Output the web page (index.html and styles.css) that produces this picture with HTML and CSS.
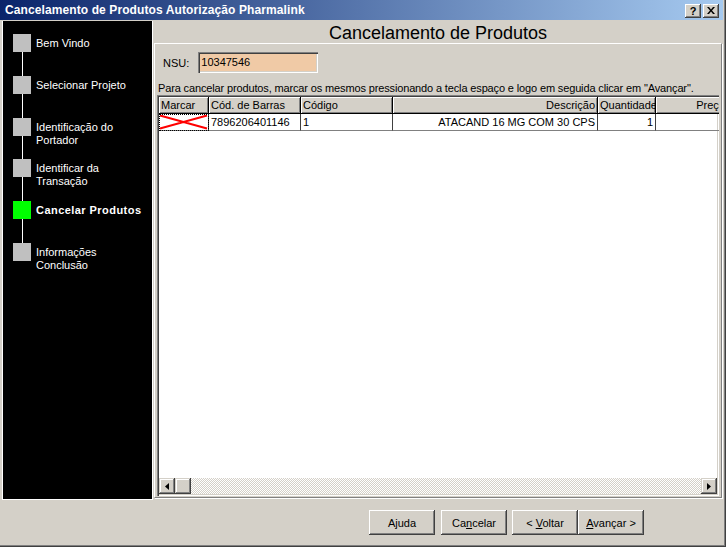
FILE: index.html
```html
<!DOCTYPE html>
<html lang="pt-BR">
<head>
    <meta charset="UTF-8">
    <title>Cancelamento de Produtos Autorização Pharmalink</title>
    <link rel="stylesheet" href="styles.css">
</head>
<body>
    <div class="window">
        <div class="titlebar">
            <span class="title">Cancelamento de Produtos Autorização Pharmalink</span>
            <div class="caption-buttons">
                <span class="cap-btn">?</span>
                <span class="cap-btn">
                    <svg width="8" height="7" viewBox="0 0 8 7"><path d="M0 0h2l2 2.5L6 0h2L5 3.5 8 7H6L4 4.5 2 7H0l3-3.5z" fill="#000"/></svg>
                </span>
            </div>
        </div>

        <div class="main">
            <!-- passos do assistente -->
            <ul class="steps">
                <li class="step">
                    <div class="marker"><span class="box"></span><span class="connector"></span></div>
                    <span class="label">Bem Vindo</span>
                </li>
                <li class="step">
                    <div class="marker"><span class="box"></span><span class="connector"></span></div>
                    <span class="label">Selecionar Projeto</span>
                </li>
                <li class="step">
                    <div class="marker"><span class="box"></span><span class="connector"></span></div>
                    <span class="label">Identificação do<br>Portador</span>
                </li>
                <li class="step">
                    <div class="marker"><span class="box"></span><span class="connector"></span></div>
                    <span class="label">Identificar da<br>Transação</span>
                </li>
                <li class="step current">
                    <div class="marker"><span class="box"></span><span class="connector"></span></div>
                    <span class="label">Cancelar Produtos</span>
                </li>
                <li class="step">
                    <div class="marker"><span class="box"></span></div>
                    <span class="label">Informações<br>Conclusão</span>
                </li>
            </ul>

            <div class="content">
                <h1 class="heading">Cancelamento de Produtos</h1>

                <div class="panel">
                    <div class="nsu">
                        <span class="nsu-label">NSU:</span>
                        <div class="input">10347546</div>
                    </div>

                    <p class="hint">Para cancelar produtos, marcar os mesmos pressionando a tecla espaço e logo em seguida clicar em "Avançar".</p>

                    <div class="grid">
                        <div class="grid-head">
                            <span class="cell">Marcar</span>
                            <span class="cell">Cód. de Barras</span>
                            <span class="cell">Código</span>
                            <span class="cell right">Descrição</span>
                            <span class="cell">Quantidade</span>
                            <span class="cell right">Preço</span>
                        </div>
                        <div class="grid-row">
                            <span class="cell mark">
                                <svg width="100%" height="100%" viewBox="0 0 50 16" preserveAspectRatio="none">
                                    <path d="M1 1.5L49 14.5M1 14.5L49 1.5" stroke="#ff0000" stroke-width="2"/>
                                </svg>
                            </span>
                            <span class="cell">7896206401146</span>
                            <span class="cell">1</span>
                            <span class="cell right">ATACAND 16 MG COM 30 CPS</span>
                            <span class="cell right">1</span>
                            <span class="cell right"></span>
                        </div>
                        <div class="grid-fill"></div>
                        <div class="hscroll">
                            <span class="sb-btn">
                                <svg width="4" height="7" viewBox="0 0 4 7"><path d="M4 0v7L0 3.5z" fill="#000"/></svg>
                            </span>
                            <span class="sb-btn"></span>
                            <span class="sb-track"></span>
                            <span class="sb-btn">
                                <svg width="4" height="7" viewBox="0 0 4 7"><path d="M0 0v7l4-3.5z" fill="#000"/></svg>
                            </span>
                        </div>
                    </div>
                </div>
            </div>
        </div>

        <div class="footer">
            <button class="btn">A<u>j</u>uda</button>
            <button class="btn">Ca<u>n</u>celar</button>
            <button class="btn">&lt; <u>V</u>oltar</button>
            <button class="btn"><u>A</u>vançar &gt;</button>
        </div>
    </div>
</body>
</html>
```

FILE: styles.css
```css
* {
    margin: 0;
    padding: 0;
    box-sizing: border-box;
}

body {
    width: 726px;
    height: 547px;
    overflow: hidden;
    font-family: "Liberation Sans", Arial, sans-serif;
    font-size: 11px;
    color: #000;
}

.window {
    width: 726px;
    height: 547px;
    background-color: #d4d0c8;
    display: flex;
    flex-direction: column;
    padding: 0 3px 2px 0;
    box-shadow: inset -1px -1px #404040, inset -2px -2px #808080;
}

/* barra de titulo */
.titlebar {
    height: 20px;
    flex: none;
    margin-bottom: 1px;
    display: flex;
    align-items: center;
    justify-content: space-between;
    padding: 0 4px 0 5px;
    background: linear-gradient(to right, #0a246a, #a6caf0);
    color: white;
    font-weight: bold;
    font-size: 12px;
}

.title {
    letter-spacing: 0.1px;
}

.caption-buttons {
    display: flex;
    gap: 2px;
    margin-top: 1px;
}

.cap-btn {
    width: 16px;
    height: 14px;
    background-color: #d4d0c8;
    box-shadow: inset -1px -1px #404040, inset 1px 1px #fff, inset -2px -2px #808080;
    display: flex;
    align-items: center;
    justify-content: center;
    color: #000;
    font-size: 11px;
    font-weight: bold;
}

.main {
    height: 479px;
    flex: none;
    display: flex;
    padding-left: 2px;
}

/* passos */
.steps {
    width: 151px;
    flex: none;
    background-color: #000;
    border: 1px solid #fff;
    border-top: none;
    list-style: none;
    padding: 13px 0 0 10px;
}

.step {
    height: 41.8px;
    display: flex;
    gap: 5px;
}

.marker {
    width: 18px;
    display: flex;
    flex-direction: column;
}

.box {
    width: 18px;
    height: 18px;
    flex: none;
    background-color: #c0c0c0;
}

.step.current .box {
    background-color: #00ff00;
}

.connector {
    flex: 1;
    width: 1px;
    margin-left: 9px;
    background-color: #fff;
}

.label {
    color: white;
    line-height: 13px;
    padding-top: 3px;
    white-space: nowrap;
}

.step.current .label {
    font-weight: bold;
    letter-spacing: 0.45px;
}

/* conteudo */
.content {
    flex: 1;
    min-width: 0;
    display: flex;
    flex-direction: column;
    padding: 0 1px;
}

.heading {
    height: 22px;
    flex: none;
    font-size: 18px;
    font-weight: normal;
    line-height: 24px;
    text-align: center;
}

.panel {
    flex: 1;
    min-height: 0;
    margin-bottom: 2px;
    display: flex;
    flex-direction: column;
    padding: 0 2px 1px 2px;
    border-top: 1px solid #fff;
    border-left: 1px solid #fff;
    border-right: 1px solid #808080;
    border-bottom: 1px solid #808080;
    box-shadow: 1px 1px #fff;
}

.nsu {
    height: 21px;
    margin: 8px 0 0 6px;
    display: flex;
    align-items: center;
    gap: 9px;
}

.input {
    width: 120px;
    height: 21px;
    padding-left: 3px;
    line-height: 21px;
    background-color: #f0caa6;
    box-shadow: inset 1px 1px #808080, inset 2px 2px #404040, inset -1px -1px #fff, inset -2px -2px #d4d0c8;
}

.hint {
    margin-top: 9px;
    padding-left: 1px;
    line-height: 13px;
    white-space: nowrap;
    letter-spacing: -0.14px;
}

/* grade */
.grid {
    flex: 1;
    min-width: 0;
    display: flex;
    flex-direction: column;
    padding: 2px;
    overflow: hidden;
    background-color: #fff;
    box-shadow: inset 1px 1px #808080, inset 2px 2px #404040, inset -1px -1px #fff, inset -2px -2px #d4d0c8;
}

.grid-head,
.grid-row {
    flex: none;
    display: grid;
    grid-template-columns: 50px 92px 92px 205px 58px 72px;
    height: 17px;
}

.cell {
    padding: 0 2px;
    line-height: 16px;
    white-space: nowrap;
    overflow: hidden;
}

.cell.right {
    text-align: right;
}

.grid-head .cell {
    background-color: #d4d0c8;
    border-right: 1px solid #000;
    border-bottom: 1px solid #000;
    box-shadow: inset 1px 1px #fff, inset -1px -1px #808080;
}

.grid-row .cell {
    border-right: 1px solid #404040;
    border-bottom: 1px solid #808080;
}

.grid-row .cell.mark {
    padding: 0;
    outline: 1px dotted #000;
    outline-offset: -1px;
}

.mark svg {
    display: block;
}

.grid-fill {
    flex: 1;
}

.hscroll {
    height: 16px;
    flex: none;
    display: flex;
}

.sb-btn {
    width: 16px;
    height: 16px;
    flex: none;
    display: flex;
    align-items: center;
    justify-content: center;
    background-color: #d4d0c8;
    box-shadow: inset -1px -1px #404040, inset 1px 1px #d4d0c8, inset -2px -2px #808080, inset 2px 2px #fff;
}

.sb-track {
    flex: 1;
    background-color: #d4d0c8;
    background-image: conic-gradient(#fff 25%, #d4d0c8 0 50%, #fff 0 75%, #d4d0c8 0);
    background-size: 2px 2px;
}

/* botoes */
.footer {
    flex: 1;
    display: flex;
    align-items: flex-start;
    padding: 10px 0 0 369px;
}

.btn {
    width: 66px;
    height: 25px;
    border: none;
    background-color: #d4d0c8;
    box-shadow: inset -1px -1px #404040, inset 1px 1px #fff, inset -2px -2px #808080;
    font-family: "Liberation Sans", Arial, sans-serif;
    font-size: 11px;
    color: #000;
}

.btn:nth-child(1) {
    margin-right: 6px;
}

.btn:nth-child(2) {
    margin-right: 5px;
}
```
